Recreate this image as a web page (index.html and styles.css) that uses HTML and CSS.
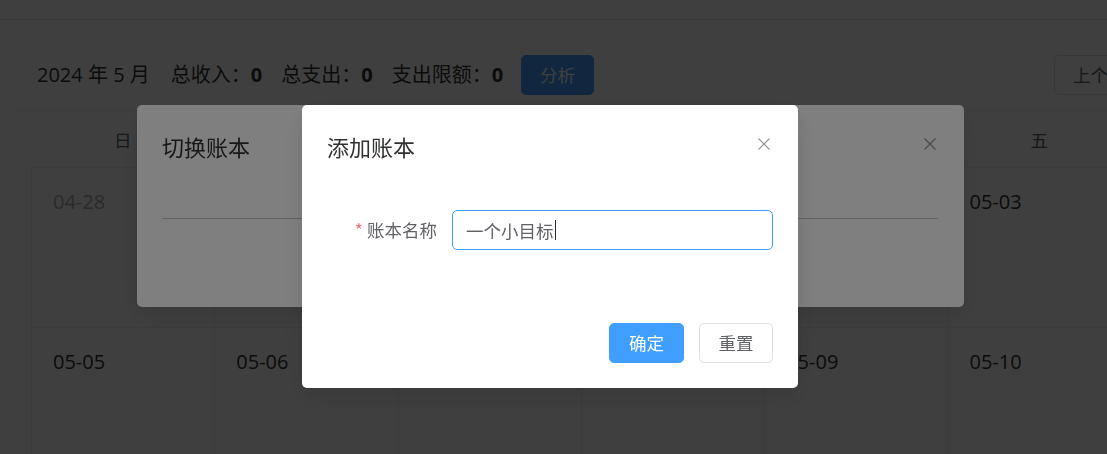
FILE: index.html
```html
<!DOCTYPE html>
<html lang="zh-CN">
<head>
<meta charset="utf-8">
<title>记账日历</title>
<link rel="stylesheet" href="styles.css">
</head>
<body>
<div class="page">
  <header class="topbar"></header>
  <main class="main">
    <section class="calendar">
      <div class="cal-header">
        <div class="summary">
          <span class="month">2024 年 5 月</span>
          <span class="stat">总收入：<b>0</b></span>
          <span class="stat">总支出：<b>0</b></span>
          <span class="stat">支出限额：<b>0</b></span>
          <button class="btn btn-primary">分析</button>
        </div>
        <div class="btn-group">
          <button class="btn">上个月</button><button class="btn">今天</button><button class="btn">下个月</button>
        </div>
      </div>
      <div class="cal-body">
        <div class="week-head">
          <div>日</div><div>一</div><div>二</div><div>三</div><div>四</div><div>五</div><div>六</div>
        </div>
        <div class="grid">
          <div class="cell prev">04-28</div><div class="cell prev">04-29</div><div class="cell prev">04-30</div><div class="cell">05-01</div><div class="cell">05-02</div><div class="cell">05-03</div><div class="cell">05-04</div>
          <div class="cell">05-05</div><div class="cell">05-06</div><div class="cell">05-07</div><div class="cell">05-08</div><div class="cell">05-09</div><div class="cell">05-10</div><div class="cell">05-11</div>
          <div class="cell">05-12</div><div class="cell">05-13</div><div class="cell">05-14</div><div class="cell">05-15</div><div class="cell">05-16</div><div class="cell">05-17</div><div class="cell">05-18</div>
        </div>
      </div>
    </section>
  </main>
</div>

<div class="overlay">
  <div class="dialog dialog-switch">
    <div class="dialog-header">
      <span class="dialog-title">切换账本</span>
      <span class="close"><svg viewBox="0 0 12 12" width="12" height="12"><path d="M0.5 0.5 L11.5 11.5 M11.5 0.5 L0.5 11.5" stroke="currentColor" stroke-width="1.2" fill="none"/></svg></span>
    </div>
    <div class="switch-body"><div class="switch-line"></div></div>
  </div>
</div>

<div class="overlay">
  <div class="dialog dialog-add">
    <div class="dialog-header">
      <span class="dialog-title">添加账本</span>
      <span class="close"><svg viewBox="0 0 12 12" width="12" height="12"><path d="M0.5 0.5 L11.5 11.5 M11.5 0.5 L0.5 11.5" stroke="currentColor" stroke-width="1.2" fill="none"/></svg></span>
    </div>
    <div class="dialog-body">
      <div class="form-item">
        <label class="form-label"><span class="req">*</span>账本名称</label>
        <div class="input is-focus"><span class="input-text">一个小目标</span><span class="caret"></span></div>
      </div>
    </div>
    <div class="dialog-footer">
      <button class="btn btn-primary btn-confirm">确定</button>
      <button class="btn btn-reset">重置</button>
    </div>
  </div>
</div>
</body>
</html>
```

FILE: styles.css
```css
html, body {
  margin: 0;
  padding: 0;
  overflow: hidden;
  background: #ffffff;
}

body {
  font-family: "Open Sans", "Noto Sans CJK SC", sans-serif;
  color: #303133;
}

.page {
  width: 1345px;
}

.topbar {
  height: 19px;
  border-bottom: 1px solid #e4e7ed;
}

.main {
  padding: 20px 12px;
}

.calendar {
  width: 1319px;
}

.cal-header {
  display: flex;
  justify-content: space-between;
  align-items: center;
  padding: 15px 25px;
  border-bottom: 1px solid #ebeef5;
}

.summary {
  display: flex;
  align-items: center;
  gap: 19px;
  font-size: 20px;
  color: #303133;
  line-height: 28px;
}

.month {
  margin-right: 2px;
}

.stat b {
  font-weight: 700;
}

.btn {
  height: 40px;
  padding: 0 18px;
  border: 1px solid #dcdfe6;
  border-radius: 5px;
  background: #ffffff;
  color: #606266;
  font-family: "Noto Sans CJK SC", sans-serif;
  font-size: 17.5px;
  line-height: 38px;
  cursor: pointer;
}

.btn-primary {
  background: #409eff;
  border-color: #409eff;
  color: #ffffff;
}

.summary .btn-primary {
  margin-left: -1px;
}

.btn-group {
  display: flex;
}

.btn-group .btn {
  border-radius: 0;
  margin-left: -1px;
}

.btn-group .btn:first-child {
  border-radius: 5px 0 0 5px;
  margin-left: 0;
}

.btn-group .btn:last-child {
  border-radius: 0 5px 5px 0;
}

.cal-body {
  padding: 15px 19px 35px;
}

.week-head {
  display: grid;
  grid-template-columns: repeat(7, 183.3px);
  font-family: "Noto Sans CJK SC", sans-serif;
  font-size: 17.5px;
  color: #606266;
  line-height: 28px;
  padding-bottom: 13px;
}

.week-head div {
  text-align: center;
}

.grid {
  display: grid;
  grid-template-columns: repeat(7, 183.3px);
  border-top: 1px solid #ebeef5;
  border-left: 1px solid #ebeef5;
  width: max-content;
}

.cell {
  box-sizing: border-box;
  height: 160px;
  border-right: 1px solid #ebeef5;
  border-bottom: 1px solid #ebeef5;
  padding: 20px 21px;
  font-size: 20px;
  line-height: 27px;
  color: #303133;
}

.cell.prev {
  color: #a8abb2;
}

/* overlays */
.overlay {
  position: fixed;
  inset: 0;
  background: rgba(0, 0, 0, 0.5);
}

.dialog {
  position: absolute;
  top: 105px;
  background: #ffffff;
  border-radius: 5px;
  box-shadow: 0 12px 32px 4px rgba(0, 0, 0, 0.04), 0 8px 20px rgba(0, 0, 0, 0.08);
  box-sizing: border-box;
  font-family: "Noto Sans CJK SC", sans-serif;
}

.dialog-switch {
  left: 137px;
  width: 827px;
  height: 202px;
}

.dialog-add {
  left: 302px;
  width: 496px;
  display: flex;
  flex-direction: column;
}

.dialog-header {
  position: relative;
  padding: 25px 25px 0;
}

.dialog-title {
  display: block;
  font-size: 22px;
  line-height: 32px;
  color: #303133;
}

.close {
  position: absolute;
  top: 33px;
  right: 28px;
  width: 12px;
  height: 12px;
  color: #909399;
  display: flex;
}

.switch-body {
  padding: 56px 26px 0 25px;
}

.switch-line {
  height: 1px;
  background: #c0c4cc;
}

.dialog-body {
  padding: 48px 25px 73px;
}

.form-item {
  display: flex;
  align-items: center;
}

.form-label {
  width: 125px;
  box-sizing: border-box;
  padding-right: 15px;
  text-align: right;
  font-size: 17.5px;
  color: #606266;
  line-height: 40px;
  flex-shrink: 0;
}

.req {
  color: #f56c6c;
  margin-right: 4px;
}

.input {
  flex: 1;
  height: 40px;
  box-sizing: border-box;
  border: 1px solid #dcdfe6;
  border-radius: 5px;
  padding: 0 13px;
  display: flex;
  align-items: center;
  font-size: 17.5px;
  color: #606266;
}

.input.is-focus {
  border-color: #409eff;
}

.caret {
  width: 1px;
  height: 20px;
  background: #303133;
  margin-left: 1px;
}

.dialog-footer {
  display: flex;
  justify-content: flex-end;
  gap: 15px;
  padding: 0 25px 25px;
}

.dialog-footer .btn {
  padding: 0;
}

.btn-confirm {
  width: 75px;
}

.btn-reset {
  width: 74px;
}
```
